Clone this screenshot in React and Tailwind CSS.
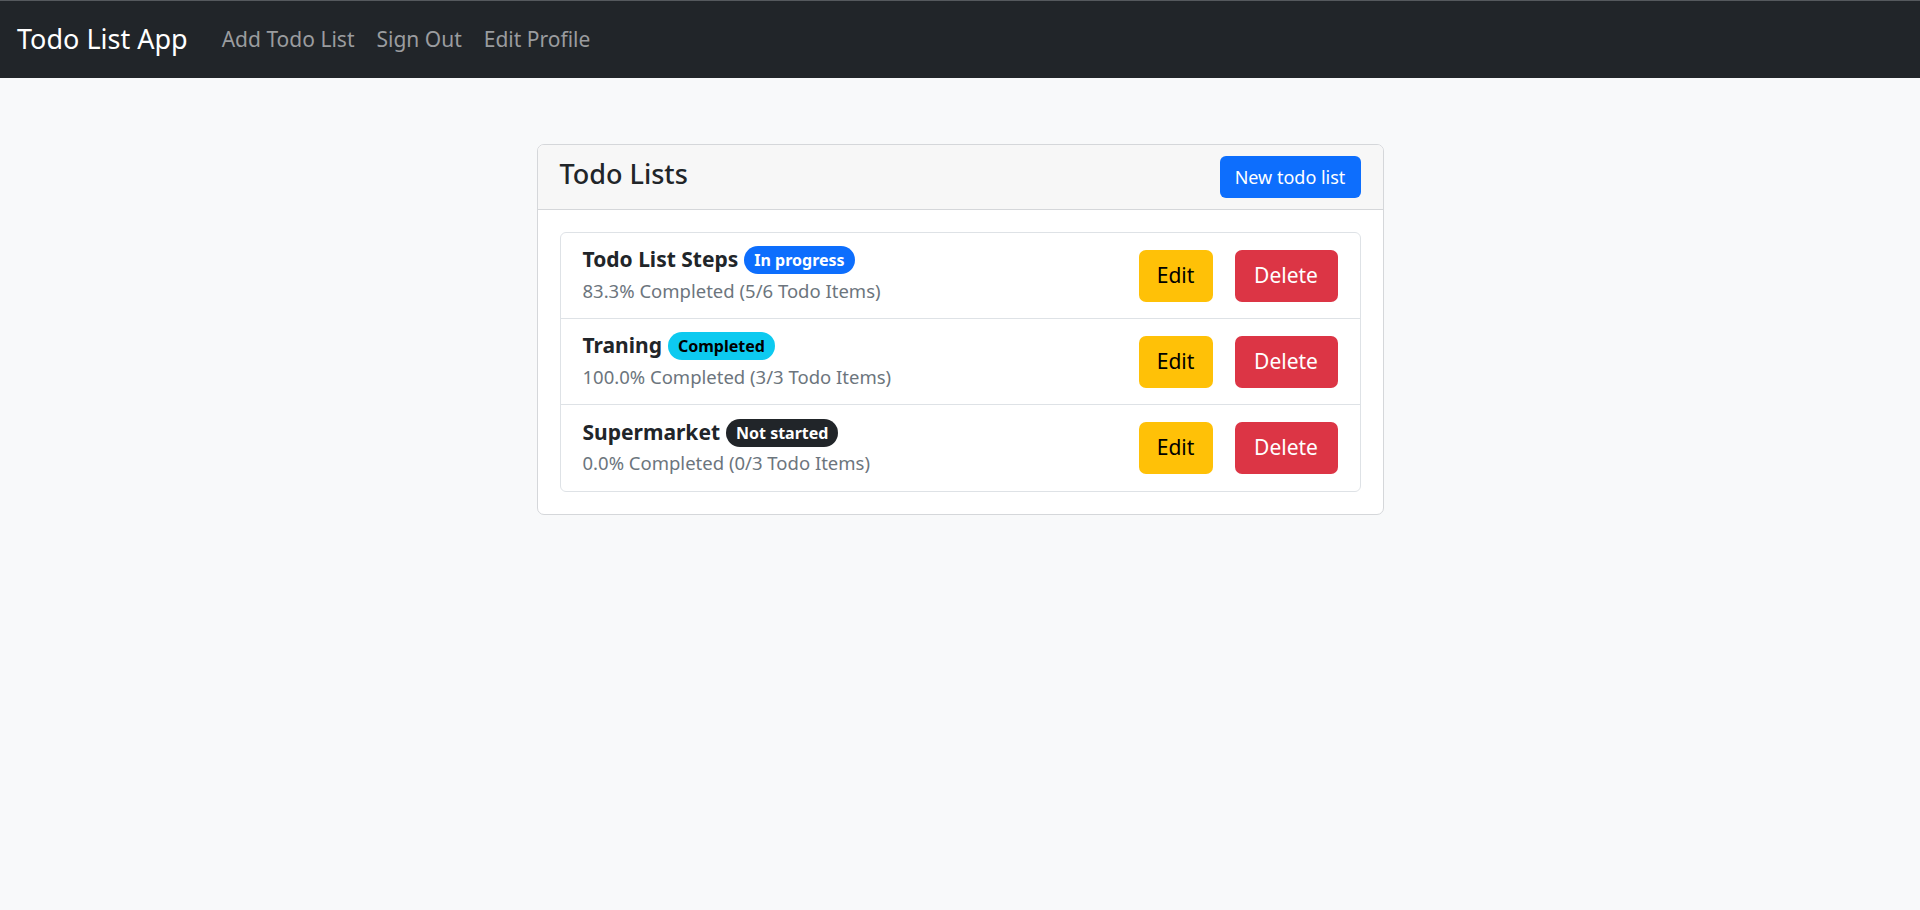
const todoLists = [
  {
    name: "Todo List Steps",
    status: "In progress",
    badge: "bg-[#0d6efd] text-white",
    percent: "83.3",
    done: 5,
    total: 6,
  },
  {
    name: "Traning",
    status: "Completed",
    badge: "bg-[#0dcaf0] text-black",
    percent: "100.0",
    done: 3,
    total: 3,
  },
  {
    name: "Supermarket",
    status: "Not started",
    badge: "bg-[#212529] text-white",
    percent: "0.0",
    done: 0,
    total: 3,
  },
];

export default function App() {
  return (
    <div className="min-h-screen bg-[#f8f9fa] font-['Noto_Sans',sans-serif] text-[#212529]">
      <nav className="flex h-[78px] items-center border-t border-[#55595d] bg-[#212529] pl-[17px]">
        <a href="#" className="text-[27px] text-white">
          Todo List App
        </a>
        <div className="ml-[23px] flex items-center">
          {["Add Todo List", "Sign Out", "Edit Profile"].map((link) => (
            <a
              key={link}
              href="#"
              className="px-[11px] text-[21px] text-[#9a9c9f] hover:text-white"
            >
              {link}
            </a>
          ))}
        </div>
      </nav>

      <main className="pt-[66px]">
        <div className="mx-auto w-[847px] overflow-hidden rounded-[7px] border border-[#d5d7da] bg-white">
          <div className="flex h-[65px] items-center justify-between border-b border-[#d5d7da] bg-[#f7f7f7] px-[22px]">
            <h3 className="mb-[6px] text-[27px] font-medium">Todo Lists</h3>
            <button className="h-[42px] w-[141px] rounded-[6px] bg-[#0d6efd] text-[18px] text-white">
              New todo list
            </button>
          </div>

          <div className="p-[22px]">
            <ul className="overflow-hidden rounded-[6px] border border-[#dee2e6]">
              {todoLists.map((list) => (
                <TodoRow key={list.name} list={list} />
              ))}
            </ul>
          </div>
        </div>
      </main>
    </div>
  );
}

function TodoRow({ list }) {
  return (
    <li className="flex h-[86px] items-center justify-between border-b border-[#dee2e6] px-[22px] last:border-b-0">
      <div className="-mt-[2px]">
        <div className="flex items-center gap-[6px]">
          <h5 className="text-[21px] font-bold">{list.name}</h5>
          <span
            className={`rounded-full px-[10px] py-[2px] text-[16px] font-bold ${list.badge}`}
          >
            {list.status}
          </span>
        </div>
        <p className="mt-[1px] text-[18.5px] text-[#6c757d]">
          {list.percent}% Completed ({list.done}/{list.total} Todo Items)
        </p>
      </div>
      <div className="flex gap-[22px]">
        <button className="h-[52px] w-[74px] rounded-[7px] bg-[#ffc107] text-[21px] text-black">
          Edit
        </button>
        <button className="h-[52px] w-[103px] rounded-[7px] bg-[#dc3545] text-[21px] text-white">
          Delete
        </button>
      </div>
    </li>
  );
}
